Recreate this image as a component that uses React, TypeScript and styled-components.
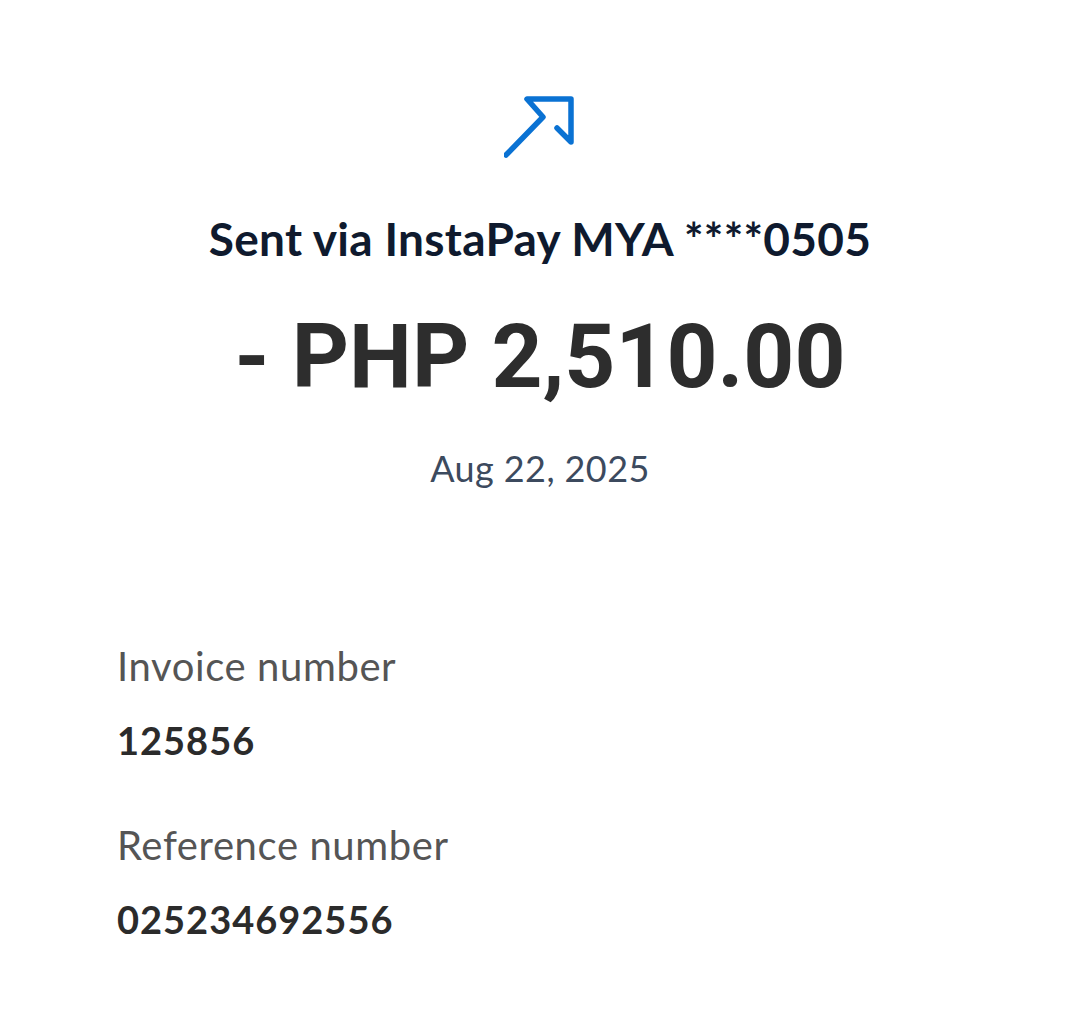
import React from "react";
import styled, { createGlobalStyle } from "styled-components";

const Global = createGlobalStyle`
  html, body { margin: 0; padding: 0; background: #ffffff; }
  body { font-family: Lato, "Open Sans", sans-serif; }
`;

const Page = styled.main`
  width: 1080px;
  min-height: 1017px;
  background: #fff;
  display: flex;
  flex-direction: column;
`;

const Header = styled.section`
  display: flex;
  flex-direction: column;
  align-items: center;
  padding-top: 95px;
`;

const IconBox = styled.div`
  width: 72px;
  height: 66px;
  display: flex;
`;

const Title = styled.h1`
  margin: 50px 0 0;
  font-family: Lato, sans-serif;
  font-weight: 700;
  font-size: 46px;
  line-height: 56px;
  color: #0f1a2e;
  letter-spacing: 0.3px;
`;

const Amount = styled.div`
  margin-top: 40px;
  font-family: Roboto, sans-serif;
  font-weight: 700;
  font-size: 89px;
  line-height: 100px;
  color: #2d2d2d;
  letter-spacing: 0px;
`;

const DateText = styled.div`
  margin-top: 39px;
  font-family: Lato, sans-serif;
  font-size: 36px;
  line-height: 44px;
  color: #3c4a5e;
  letter-spacing: 0.4px;
`;

const Details = styled.section`
  display: flex;
  flex-direction: column;
  padding: 152px 0 0 117px;
`;

const Field = styled.div`
  display: flex;
  flex-direction: column;
  & + & {
    margin-top: 57px;
  }
`;

const Label = styled.div`
  font-family: Lato, sans-serif;
  font-size: 40px;
  line-height: 48px;
  color: #555555;
  letter-spacing: 0.6px;
`;

const Value = styled.div`
  margin-top: 26px;
  font-family: Lato, sans-serif;
  font-weight: 700;
  font-size: 38px;
  line-height: 48px;
  color: #2b2b2b;
  letter-spacing: 1px;
`;

const SentIcon = () => (
  <svg width="72" height="66" viewBox="0 0 72 66" fill="none">
    <path
      d="M2 60 L39 22 L23 4 L67 4 L67 47 L53 33"
      stroke="#0a72d3"
      strokeWidth="5.5"
      strokeLinecap="round"
      strokeLinejoin="round"
    />
  </svg>
);

export default function App() {
  return (
    <Page>
      <Global />
      <Header>
        <IconBox>
          <SentIcon />
        </IconBox>
        <Title>Sent via InstaPay MYA ****0505</Title>
        <Amount>- PHP 2,510.00</Amount>
        <DateText>Aug 22, 2025</DateText>
      </Header>
      <Details>
        <Field>
          <Label>Invoice number</Label>
          <Value>125856</Value>
        </Field>
        <Field>
          <Label>Reference number</Label>
          <Value>025234692556</Value>
        </Field>
      </Details>
    </Page>
  );
}
